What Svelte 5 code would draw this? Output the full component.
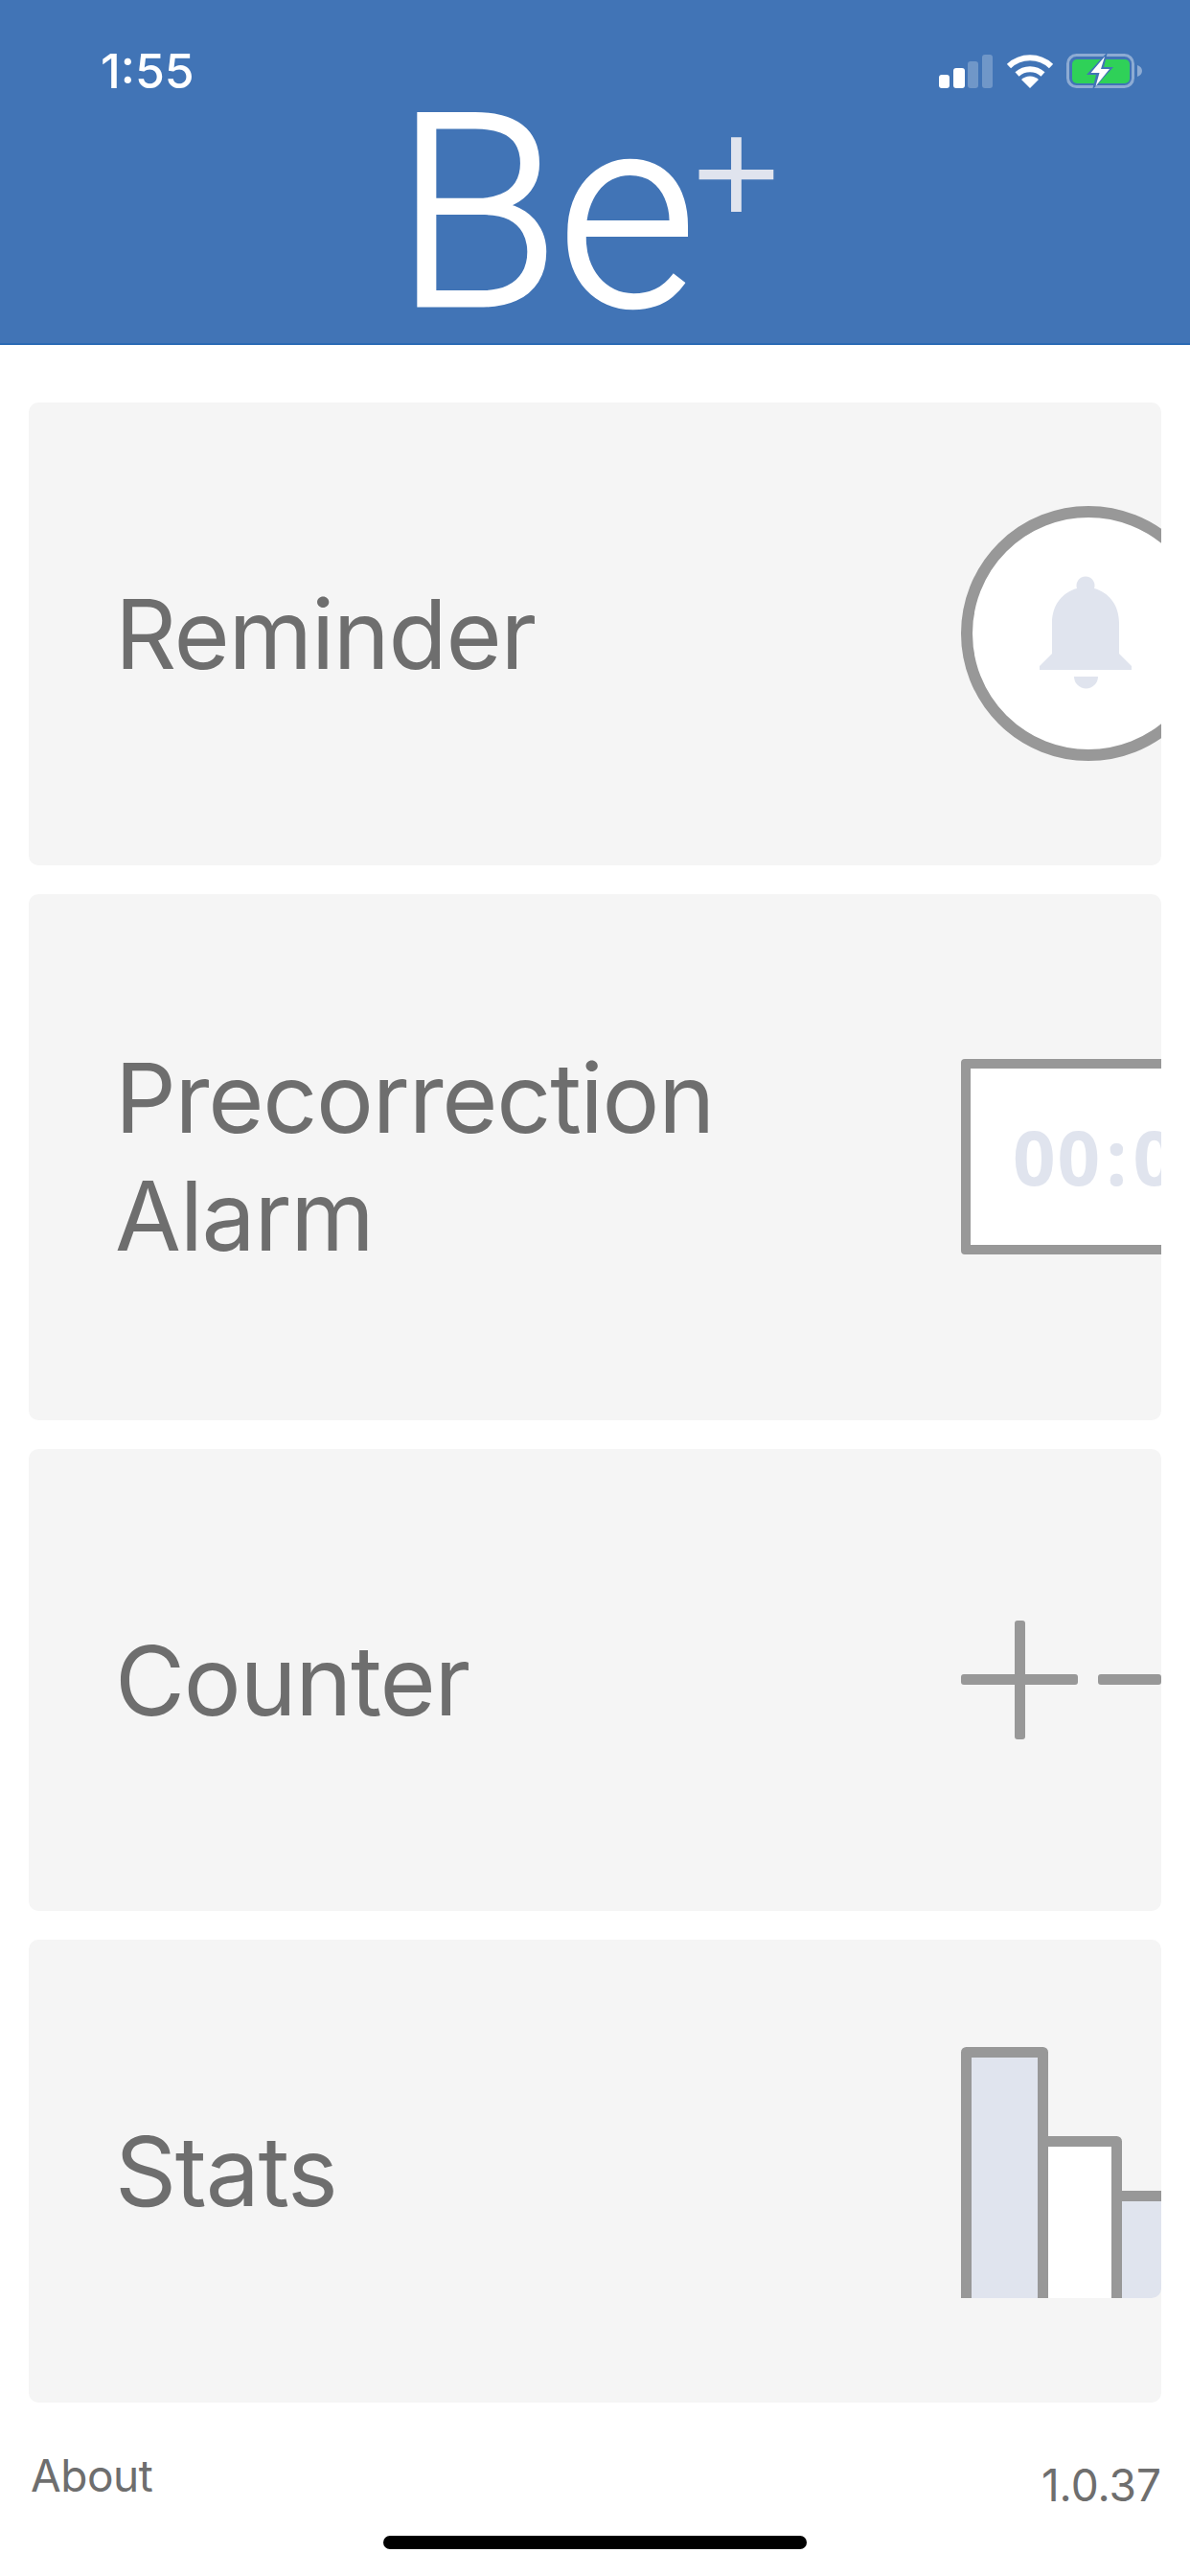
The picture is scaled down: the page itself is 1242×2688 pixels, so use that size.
<script>
  const cards = [
    { id: "reminder", lines: ["Reminder"] },
    { id: "alarm", lines: ["Precorrection", "Alarm"] },
    { id: "counter", lines: ["Counter"] },
    { id: "stats", lines: ["Stats"] },
  ];
</script>

<div class="page">
  <header class="header">
    <div class="status">
      <span class="time">1:55</span>
      <div class="status-icons">
        <svg width="58" height="36" viewBox="0 0 58 36">
          <rect x="1" y="22" width="11" height="14" rx="3" fill="#fff" />
          <rect x="16" y="15" width="12" height="21" rx="3" fill="#fff" />
          <rect x="31" y="8" width="11" height="28" rx="3" fill="#fff" opacity="0.25" />
          <rect x="46" y="1" width="11" height="35" rx="3" fill="#fff" opacity="0.25" />
        </svg>
        <svg class="wifi" width="48" height="36" viewBox="0 0 48 36">
          <path d="M2 13 A32 32 0 0 1 46 13" fill="none" stroke="#fff" stroke-width="6" />
          <path d="M10.5 21.5 A20 20 0 0 1 37.5 21.5" fill="none" stroke="#fff" stroke-width="6" />
          <path d="M15 27 A13 13 0 0 1 33 27 L24 36 Z" fill="#fff" />
        </svg>
        <svg class="battery" width="80" height="40" viewBox="0 -2 80 40">
          <rect x="1.500" y="1.500" width="68" height="33" rx="9" fill="none" stroke="#fff" stroke-opacity="0.4" stroke-width="3" />
          <rect x="6" y="6" width="60" height="25" rx="5" fill="#2fd158" />
          <path d="M74 12 C77 13 79 15 79 18 C79 21 77 23 74 24 Z" fill="#fff" fill-opacity="0.4" />
          <path d="M43 -2 L21 22 L31 22 L27 38 L49 14 L39 14 Z" fill="#4174b6" />
          <path d="M40 3 L25.500 20 L34.500 20 L30.500 34 L45 16 L36 16 Z" fill="#fff" />
        </svg>
      </div>
    </div>
    <div class="logo">
      <span class="logo-be">Be</span>
      <span class="logo-plus">+</span>
    </div>
  </header>

  <main class="cards">
    {#each cards as card}
      <section class="card {card.id}">
        <h2 class="label">
          {#each card.lines as line}
            <span>{line}</span>
          {/each}
        </h2>
        <div class="icon">
          {#if card.id === "reminder"}
            <div class="bell-ring">
              <svg class="bell" width="98" height="120" viewBox="0 0 98 120">
                <path
                  d="M40 14 A9.500 9.500 0 1 1 58 14 C73 18 84 31 84 50 L84 82 L97 95 L97 99 L1 99 L1 95 L14 82 L14 50 C14 31 25 18 40 14 Z"
                  fill="#e0e4ee"
                />
                <path d="M37 106 L62 106 A12.500 12.500 0 0 1 37 106 Z" fill="#e0e4ee" />
              </svg>
            </div>
          {:else if card.id === "alarm"}
            <div class="timer">00<span class="colon">:</span>00:00</div>
          {:else if card.id === "counter"}
            <svg width="209" height="124" viewBox="0 0 209 124">
              <g fill="#989898">
                <rect x="0" y="56" width="122" height="11" rx="3" />
                <rect x="56" y="0" width="11" height="124" rx="3" />
                <rect x="143" y="56" width="66" height="11" rx="3" />
              </g>
            </svg>
          {:else}
            <svg class="stats-icon" width="209" height="262" viewBox="0 0 209 262">
              <path d="M168 155 H209 V252 A10 10 0 0 1 199 262 H168 Z" fill="#e0e4ee" />
              <rect x="5.500" y="5.500" width="80" height="262" fill="#e0e4ee" />
              <rect x="91" y="98.500" width="71" height="170" fill="#fff" />
              <g fill="none" stroke="#989898" stroke-width="11" stroke-linejoin="round">
                <path d="M5.500 262 V5.500 H85.500 V262" />
                <path d="M85.500 98.500 H162.500 V262" />
                <path d="M162.500 155.500 H209" />
              </g>
            </svg>
          {/if}
        </div>
      </section>
    {/each}
  </main>

  <footer class="footer">
    <span class="about">About</span>
    <span class="version">1.0.37</span>
  </footer>
  <div class="home-bar"></div>
</div>

<style>
  :global(body) {
    margin: 0;
    background: #fff;
  }

  .page {
    width: 1242px;
    height: 2688px;
    display: flex;
    flex-direction: column;
    overflow: hidden;
    font-family: Inter, "Liberation Sans", sans-serif;
    background: #fff;
  }

  .header {
    height: 360px;
    flex: none;
    box-sizing: border-box;
    background: #4174b6;
    border-bottom: 2px solid #2a6ab4;
    padding: 56px 49px 0 105px;
    display: flex;
    flex-direction: column;
  }

  .status {
    height: 36px;
    display: flex;
    justify-content: space-between;
    align-items: center;
  }

  .time {
    color: #fff;
    font-size: 50px;
    font-weight: 500;
    line-height: 36px;
  }

  .status-icons {
    display: flex;
    align-items: center;
  }

  .wifi {
    margin-left: 14px;
  }

  .battery {
    margin-left: 14px;
  }

  .logo {
    display: flex;
    justify-content: center;
    align-items: flex-start;
    height: 220px;
    margin: 21px 0 0 -62px;
  }

  .logo-be {
    color: #fff;
    font-family: Roboto, sans-serif;
    font-size: 282px;
    font-weight: 300;
    line-height: 220px;
    letter-spacing: -3px;
    -webkit-text-stroke: 3px #fff;
  }

  .logo-plus {
    color: #e0e4ee;
    font-size: 172px;
    font-weight: 300;
    line-height: 150px;
    margin: -20px 0 0 -12px;
  }

  .cards {
    display: flex;
    flex-direction: column;
    gap: 30px;
    padding: 60px 30px 0;
  }

  .card {
    height: 482.7px;
    display: flex;
    align-items: center;
    padding-left: 90px;
    background: #f5f5f5;
    border-radius: 10px;
    overflow: hidden;
  }

  .alarm {
    height: 549px;
  }

  .label {
    width: 883px;
    flex: none;
    margin: 0;
    display: flex;
    flex-direction: column;
    color: #6e6e6e;
    font-size: 100px;
    font-weight: 400;
    line-height: 123px;
    letter-spacing: -1.3px;
  }

  .icon {
    flex: none;
    display: flex;
    align-items: center;
  }

  .bell-ring {
    width: 266px;
    height: 266px;
    box-sizing: border-box;
    border: 12px solid #989898;
    border-radius: 50%;
    background: #fff;
    display: flex;
    align-items: center;
    justify-content: center;
  }

  .bell {
    margin: -2px 0 0 -7px;
  }

  .timer {
    width: 400px;
    height: 204px;
    box-sizing: border-box;
    border: 10px solid #989898;
    border-radius: 4px;
    background: #fff;
    padding-left: 44px;
    display: flex;
    align-items: center;
    color: #e0e4ee;
    font-family: "Open Sans", sans-serif;
    font-size: 78px;
    font-weight: 700;
    letter-spacing: 2px;
    white-space: nowrap;
  }

  .colon {
    margin: 0 4px 0 4px;
  }

  .stats-icon {
    margin-top: 3px;
  }

  .footer {
    display: flex;
    justify-content: space-between;
    align-items: flex-start;
    padding: 49px 30px 0 32px;
    color: #6e6e6e;
    font-size: 46px;
    line-height: 54px;
  }

  .about {
    letter-spacing: -0.5px;
  }

  .version {
    margin-top: 10px;
  }

  .home-bar {
    width: 442px;
    height: 14px;
    border-radius: 7px;
    background: #000;
    margin: 26px auto 0;
  }
</style>
